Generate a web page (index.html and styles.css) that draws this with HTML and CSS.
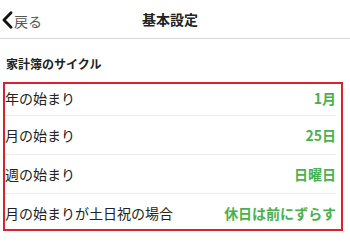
FILE: index.html
```html
<!DOCTYPE html>
<html lang="ja">
<head>
<meta charset="utf-8">
<link rel="stylesheet" href="styles.css">
</head>
<body>
<header class="nav">
  <div class="back">
    <svg class="chev" width="12" height="18" viewBox="0 0 12 18"><path d="M10 1.8 L3 9 L10 16.2" fill="none" stroke="#111" stroke-width="2.8" stroke-linecap="round" stroke-linejoin="round"/></svg>
    <span class="back-label">戻る</span>
  </div>
  <div class="title">基本設定</div>
</header>
<div class="section-title">家計簿のサイクル</div>
<ul class="list">
  <li class="row"><span class="label">年の始まり</span><span class="value">1月</span></li>
  <li class="row"><span class="label">月の始まり</span><span class="value">25日</span></li>
  <li class="row"><span class="label">週の始まり</span><span class="value">日曜日</span></li>
  <li class="row"><span class="label">月の始まりが土日祝の場合</span><span class="value">休日は前にずらす</span></li>
</ul>
</body>
</html>
```

FILE: styles.css
```css
* { box-sizing: border-box; }
html, body {
  margin: 0;
  padding: 0;
  background: #fff;
  font-family: "Noto Sans CJK JP", "Noto Sans", sans-serif;
  color: #222;
}
.nav {
  position: relative;
  height: 39px;
  border-bottom: 1px solid #d6d6d6;
  display: flex;
  align-items: center;
  justify-content: center;
}
.back {
  position: absolute;
  left: 1px;
  top: 0;
  height: 38px;
  display: flex;
  align-items: center;
  gap: 1px;
}
.chev { display: block; margin-top: 2px; }
.back-label {
  font-size: 14px;
  color: #555;
  line-height: 16px;
  margin-top: 3px;
}
.title {
  font-size: 14px;
  font-weight: 700;
  color: #222;
  line-height: 18px;
  margin-right: 10px;
  margin-bottom: 1px;
}
.section-title {
  font-size: 12px;
  font-weight: 700;
  color: #222;
  line-height: 16px;
  padding: 17px 6px 10px;
}
.list {
  list-style: none;
  margin: 0 7px 0 3px;
  padding: 0;
  border: 2px solid #d8232f;
}
.row {
  display: flex;
  justify-content: space-between;
  align-items: center;
  margin-right: 5px;
  padding: 9px 0;
  border-bottom: 1px solid #ececec;
  font-size: 14px;
  line-height: 20px;
}
.row:first-child { padding-top: 4px; padding-bottom: 7px; }
.row:last-child { border-bottom: none; padding-bottom: 6px; }
.label { color: #222; }
.value { color: #47b24d; font-weight: 700; }
```
